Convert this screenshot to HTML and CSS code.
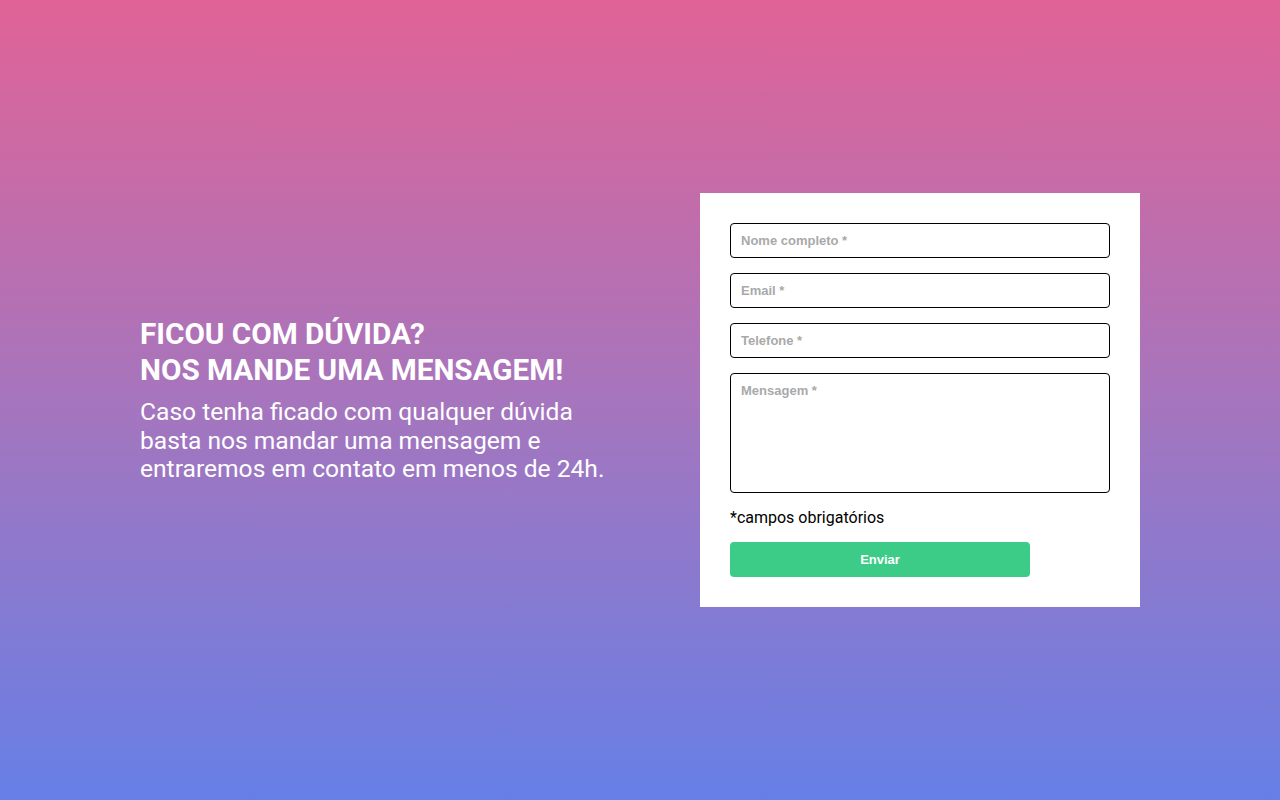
FILE: index.html
```html
<!DOCTYPE html>
<html lang="pt-BR">
<head>
<meta charset="utf-8">
<title>Contato</title>
<link rel="stylesheet" href="styles.css">
</head>
<body>
<main class="page">
  <section class="intro">
    <h1 class="title">Ficou com dúvida?<br>Nos mande uma mensagem!</h1>
    <p class="lead">Caso tenha ficado com qualquer dúvida basta nos mandar uma mensagem e entraremos em contato em menos de 24h.</p>
  </section>
  <form class="card">
    <input class="field" type="text" placeholder="Nome completo *">
    <input class="field" type="email" placeholder="Email *">
    <input class="field" type="tel" placeholder="Telefone *">
    <textarea class="field area" placeholder="Mensagem *"></textarea>
    <p class="note">*campos obrigatórios</p>
    <button class="send" type="button">Enviar</button>
  </form>
</main>
</body>
</html>
```

FILE: styles.css
```css
* { box-sizing: border-box; }
html, body { margin: 0; height: 100%; }
body {
  background: linear-gradient(180deg, #e06396 0%, #a675bd 50%, #667fe6 100%);
  font-family: Roboto, "Liberation Sans", Arial, sans-serif;
}
.page {
  height: 800px;
  display: flex;
  align-items: center;
  justify-content: center;
  gap: 60px;
}
.intro {
  width: 500px;
  padding-right: 20px;
  color: #fff;
}
.title {
  margin: 0 0 10px;
  font-size: 29.7px;
  line-height: 36px;
  font-weight: 700;
  text-transform: uppercase;
}
.lead {
  margin: 0;
  font-size: 24.6px;
  line-height: 28.5px;
  font-weight: 400;
}
.card {
  width: 440px;
  background: #fff;
  padding: 30px;
  display: flex;
  flex-direction: column;
  gap: 15px;
}
.field {
  display: block;
  width: 380px;
  height: 35px;
  border: 1px solid #000;
  border-radius: 4px;
  padding: 0 10px;
  font-family: "Liberation Sans", Arial, sans-serif;
  font-size: 13px;
  font-weight: 700;
  color: #333;
  background: #fff;
  outline: none;
}
.field::placeholder { color: #a9a9a9; opacity: 1; }
.area {
  height: 120px;
  padding: 9px 10px;
  resize: none;
  line-height: 15px;
}
.note {
  margin: 0;
  font-size: 16px;
  line-height: 19px;
  color: #000;
}
.send {
  width: 300px;
  height: 35px;
  border: 0;
  border-radius: 4px;
  background: #3ccc88;
  color: #fff;
  font-family: "Liberation Sans", Arial, sans-serif;
  font-size: 13px;
  font-weight: 700;
  cursor: pointer;
}
```
